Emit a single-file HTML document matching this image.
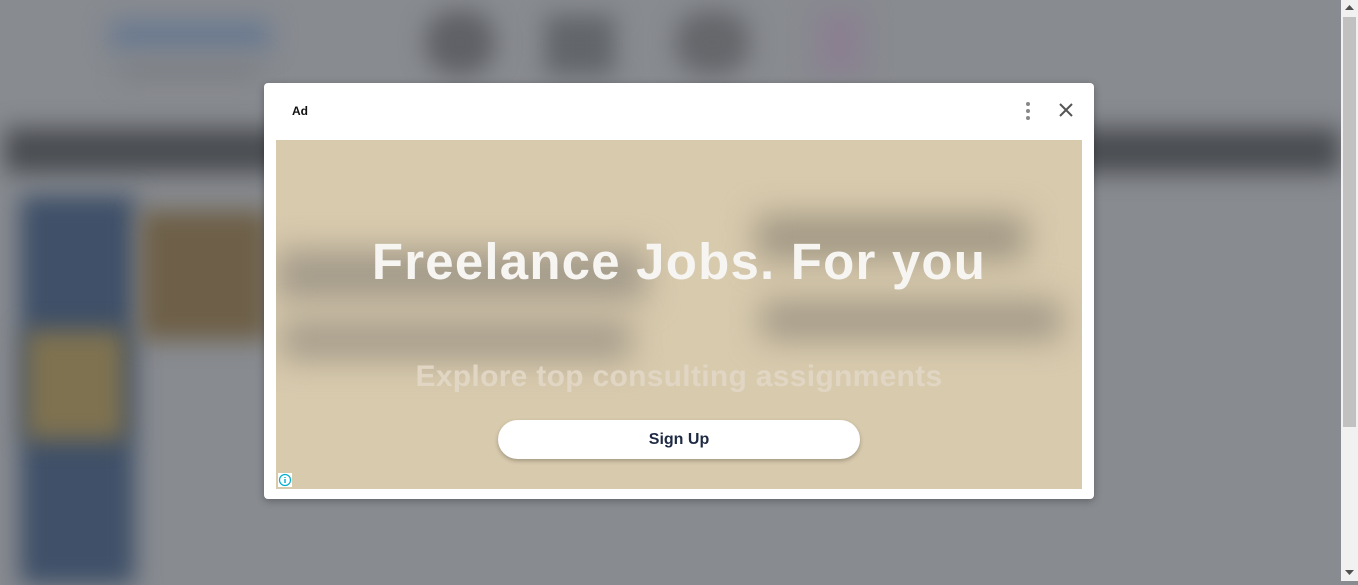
<!DOCTYPE html>
<html><head><meta charset="utf-8"><style>
*{margin:0;padding:0;box-sizing:border-box}
body{width:1358px;height:581px;overflow:hidden;background:#888b90;font-family:"Liberation Sans",sans-serif;position:relative}
.b{position:absolute;filter:blur(12px)}
.sb{position:absolute;right:0;top:0;width:17px;height:581px;background:#f1f1f1}
.sb .t{position:absolute;left:2px;top:17px;width:13px;height:410px;background:#c1c1c1}
.modal{position:absolute;left:264px;top:83px;width:830px;height:416px;background:#fff;border-radius:4px;box-shadow:0 2px 8px rgba(0,0,0,.3)}
.ad{position:absolute;left:28px;top:21px;font-size:12px;font-weight:bold;color:#111}
.img{position:absolute;left:12px;top:57px;width:806px;height:349px;background:#d8caad;overflow:hidden}
.h{position:absolute;left:0;width:806px;top:92px;text-align:center;font-size:51px;font-weight:bold;color:#f7f5f2;letter-spacing:1.2px}
.s{position:absolute;left:0;width:806px;top:220px;text-align:center;font-size:30px;font-weight:bold;color:#e0d6c3;letter-spacing:0.3px}
.btn{position:absolute;left:222px;top:280px;width:362px;height:39px;border-radius:20px;background:#fff;box-shadow:0 2px 4px rgba(0,0,0,.25);text-align:center;line-height:39px;font-size:16px;font-weight:bold;color:#1e2a44}
</style></head><body>
<div class="b" style="left:110px;top:20px;width:160px;height:30px;background:#6a7a90"></div>
<div class="b" style="left:120px;top:60px;width:140px;height:20px;background:#7d8085"></div>
<div class="b" style="left:425px;top:10px;width:70px;height:65px;background:#5f6166;border-radius:30px"></div>
<div class="b" style="left:545px;top:15px;width:70px;height:60px;background:#62666a"></div>
<div class="b" style="left:675px;top:10px;width:75px;height:65px;background:#65676b;border-radius:30px"></div>
<div class="b" style="left:815px;top:10px;width:50px;height:65px;background:#8a8090"></div>
<div class="b" style="left:5px;top:128px;width:1335px;height:45px;background:#4a4d51"></div>
<div class="b" style="left:20px;top:195px;width:115px;height:390px;background:#3f5068"></div>
<div class="b" style="left:25px;top:330px;width:100px;height:110px;background:#7f7250"></div>
<div class="b" style="left:140px;top:210px;width:130px;height:130px;background:#6e6048"></div>
<div class="sb"><div class="t"></div>
<svg style="position:absolute;left:4px;top:5px" width="9" height="6"><path d="M0 5L4.5 0L9 5Z" fill="#505050"/></svg>
<svg style="position:absolute;left:4px;top:570px" width="9" height="6"><path d="M0 0L4.5 5L9 0Z" fill="#505050"/></svg>
</div>
<div class="modal">
<div class="ad">Ad</div>
<svg style="position:absolute;left:759px;top:18px" width="10" height="20"><circle cx="5" cy="3" r="2" fill="#888"/><circle cx="5" cy="10" r="2" fill="#888"/><circle cx="5" cy="17" r="2" fill="#888"/></svg>
<svg style="position:absolute;left:795px;top:20px" width="14" height="14"><path d="M1 1L13 13M13 1L1 13" stroke="#555" stroke-width="2"/></svg>
<div class="img">
<div class="b" style="left:0;top:110px;width:370px;height:50px;background:#a39a8a;filter:blur(16px)"></div>
<div class="b" style="left:5px;top:180px;width:350px;height:40px;background:#a59c8b;filter:blur(16px)"></div>
<div class="b" style="left:480px;top:75px;width:270px;height:45px;background:#a19885;filter:blur(16px)"></div>
<div class="b" style="left:485px;top:160px;width:300px;height:40px;background:#a39a88;filter:blur(16px)"></div>
<div class="h">Freelance Jobs. For you</div>
<div class="s">Explore top consulting assignments</div>
<div class="btn">Sign Up</div>
<svg style="position:absolute;left:2px;top:333px" width="14" height="14"><rect x="0" y="0" width="14" height="14" fill="#fff"/><circle cx="7" cy="7" r="5.5" fill="none" stroke="#00aecd" stroke-width="1.2"/><path d="M7 6v4M7 4v1" stroke="#00aecd" stroke-width="1.4"/></svg>
</div>
</div>
</body></html>
